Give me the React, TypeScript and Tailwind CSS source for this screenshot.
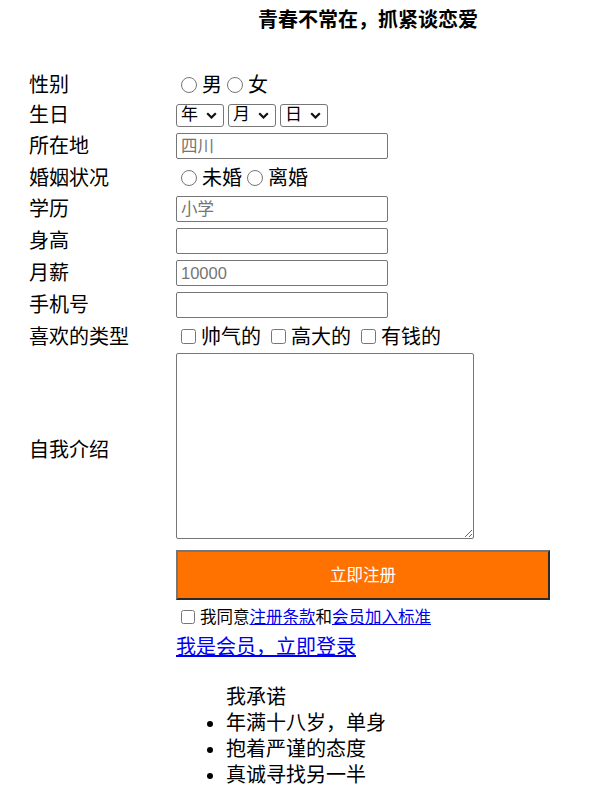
import type { ReactNode } from 'react';

const inputCls =
  'h-[26px] w-[212px] rounded-[2px] border border-[#767676] bg-white pl-[4px] text-[16.5px] text-black placeholder:text-[#757575] outline-none';

function Row({ label, h, children }: { label: string; h: string; children: ReactNode }) {
  return (
    <div className={`flex items-center ${h}`}>
      <div className="w-[147px] shrink-0">{label}</div>
      <div className="flex items-center">{children}</div>
    </div>
  );
}

function Radio({ name, text }: { name: string; text: string }) {
  return (
    <label className="flex items-center">
      <input type="radio" name={name} className="ml-[5px] mr-[5px] h-[16px] w-[16px]" />
      <span>{text}</span>
    </label>
  );
}

function Check({ text }: { text: string }) {
  return (
    <label className="mr-[5px] flex items-center">
      <input type="checkbox" className="ml-[5px] mr-[5px] h-[15px] w-[15px]" />
      <span>{text}</span>
    </label>
  );
}

function Select({ text }: { text: string }) {
  return (
    <span className="relative mr-[4px] inline-flex">
      <select className="h-[23px] w-[48px] appearance-none rounded-[3px] border border-[#767676] bg-white pl-[4px] text-[17px] leading-[20px] text-black">
        <option>{text}</option>
      </select>
      {/* chevron */}
      <svg
        viewBox="0 0 11 7"
        className="pointer-events-none absolute right-[7px] top-[8px] h-[7px] w-[11px]"
        fill="none"
        stroke="#111"
        strokeWidth="2.2"
      >
        <path d="M1.2 1.2l4.3 4.3 4.3-4.3" />
      </svg>
    </span>
  );
}

export default function App() {
  return (
    <div className="min-h-[811px] bg-white font-['Liberation_Sans','Noto_Sans_CJK_SC',sans-serif] text-[20px] leading-[26px] text-black">
      <h4 className="pl-[258px] pt-[7px] text-[20px] font-bold leading-[26px]">青春不常在，抓紧谈恋爱</h4>

      <form className="mt-[37px] pl-[29px]">
        <Row label="性别" h="h-[30px]">
          <Radio name="sex" text="男" />
          <Radio name="sex" text="女" />
        </Row>
        <Row label="生日" h="h-[30px]">
          <Select text="年" />
          <Select text="月" />
          <Select text="日" />
        </Row>
        <Row label="所在地" h="h-[32px]">
          <input className={inputCls} placeholder="四川" />
        </Row>
        <Row label="婚姻状况" h="h-[31px]">
          <Radio name="marry" text="未婚" />
          <Radio name="marry" text="离婚" />
        </Row>
        <Row label="学历" h="h-[32px]">
          <input className={inputCls} placeholder="小学" />
        </Row>
        <Row label="身高" h="h-[32px]">
          <input className={`${inputCls} border-[#333]`} />
        </Row>
        <Row label="月薪" h="h-[32px]">
          <input className={inputCls} placeholder="10000" />
        </Row>
        <Row label="手机号" h="h-[32px]">
          <input className={inputCls} />
        </Row>
        <Row label="喜欢的类型" h="h-[31px]">
          <Check text="帅气的" />
          <Check text="高大的" />
          <Check text="有钱的" />
        </Row>

        <div className="flex h-[195px] items-center">
          <div className="w-[147px] shrink-0">自我介绍</div>
          <div className="h-full pt-[1px]">
            <textarea className="h-[186px] w-[298px] rounded-[2px] border border-[#767676] bg-white outline-none" />
          </div>
        </div>

        <div className="flex h-[56px] items-center pl-[147px]">
          <button
            type="button"
            className="h-[50px] w-[374px] border-2 border-b-[#2a2a2a] border-l-[#767676] border-r-[#2a2a2a] border-t-[#767676] bg-[#ff7200] text-[16.5px] text-white"
          >
            立即注册
          </button>
        </div>

        <div className="flex h-[27px] items-center pl-[147px] text-[16.5px]">
          <input type="checkbox" className="ml-[5px] mr-[5px] h-[14px] w-[14px]" />
          <span>
            我同意
            <a href="#" className="text-[#0000ee] underline">
              注册条款
            </a>
            和
            <a href="#" className="text-[#0000ee] underline">
              会员加入标准
            </a>
          </span>
        </div>

        <div className="flex h-[34px] items-center pl-[147px]">
          <a href="#" className="text-[#0000ee] underline">
            我是会员，立即登录
          </a>
        </div>

        <ul className="ml-[147px] mt-[20px] list-disc pl-[50px]">
          <span className="block">我承诺</span>
          <li>年满十八岁，单身</li>
          <li>抱着严谨的态度</li>
          <li>真诚寻找另一半</li>
        </ul>
      </form>
    </div>
  );
}
